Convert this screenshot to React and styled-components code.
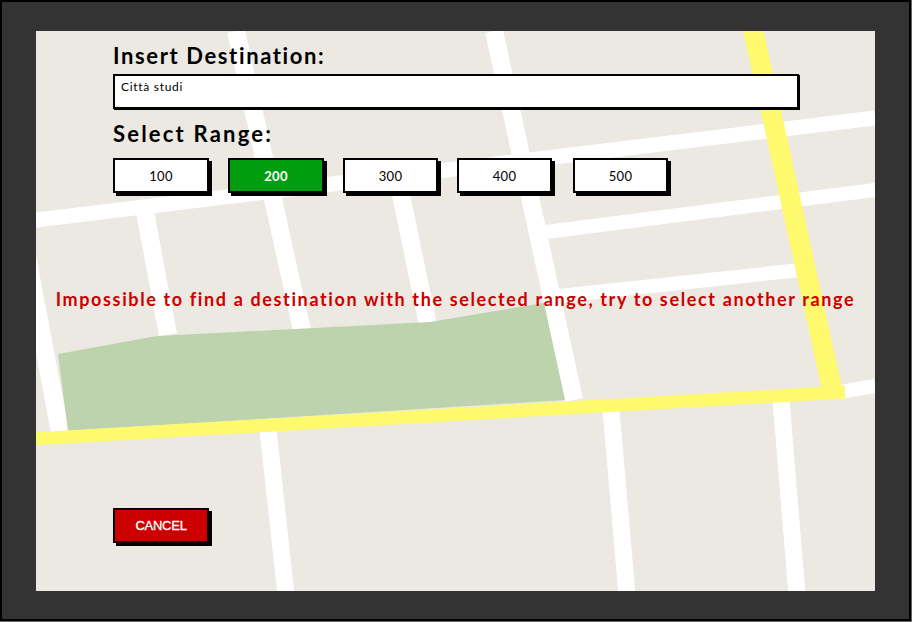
import React from 'react'
import styled, { createGlobalStyle } from 'styled-components'

const GlobalStyle = createGlobalStyle`
    html, body {
        margin: 0;
        padding: 0;
        background: #666;
    }
`

const Frame = styled.div`
    box-sizing: border-box;
    width: 911px;
    height: 621px;
    padding: 29px 34px 28px 34px;
    background: #333;
    border: 2px solid #000;
`

const Screen = styled.main`
    position: relative;
    box-sizing: border-box;
    width: 839px;
    height: 560px;
    padding: 11px 76px 0 77px;
    display: flex;
    flex-direction: column;
    background: #ebe9e1;
    overflow: hidden;
    font-family: "Lato", "Liberation Sans", sans-serif;
    color: #000;
`

const MapDrawing = styled.svg`
    position: absolute;
    top: 0;
    left: 0;
    width: 839px;
    height: 560px;
    filter: blur(0.4px);
`

const Content = styled.div`
    position: relative;
    display: flex;
    flex-direction: column;
    flex: 1;
`

const Label = styled.label`
    display: block;
    height: 28px;
    line-height: 28px;
    font-size: 22px;
    font-weight: 700;
    letter-spacing: ${props => props.$spacing}px;
    white-space: nowrap;
`

const DestinationBox = styled.div`
    box-sizing: border-box;
    width: 686px;
    height: 35px;
    margin: 4px 0 11px;
    padding: 3px 6px;
    background: #fff;
    border: 2px solid #000;
    box-shadow: 1px 1px 0 #000;
    font-size: 12px;
    line-height: 15px;
    letter-spacing: 0.7px;
`

const RangeRow = styled.div`
    display: flex;
    gap: 19px;
    margin-top: 10px;

    button:last-child {
        margin-left: 2px;
    }
`

const SketchButton = styled.button`
    box-sizing: border-box;
    width: ${props => props.$wide ? 96 : 95}px;
    height: 35px;
    padding: 0;
    border: 2px solid #000;
    border-radius: 0;
    box-shadow: 3px 3px 0 #000;
    background: ${props => props.$bg || '#fff'};
    color: ${props => props.$bg ? '#fff' : '#000'};
    font-family: "Lato", "Liberation Sans", sans-serif;
    font-size: 13px;
    font-weight: ${props => props.$bg ? 700 : 400};
    letter-spacing: 0.3px;
`

const ErrorMessage = styled.p`
    margin: 94px 0 0 -77px;
    width: 839px;
    text-align: center;
    color: #c00;
    font-size: 18px;
    line-height: 24px;
    font-weight: 700;
    letter-spacing: 1.63px;
    white-space: nowrap;
`

const CancelButton = styled(SketchButton)`
    margin-top: 197px;
    font-family: "Liberation Sans", Arial, sans-serif;
    font-size: 13px;
    font-weight: 400;
    letter-spacing: -0.25px;
    -webkit-text-stroke: 0.3px #fff;
`

const ROADS = [
    [236, 31, 303, 335, 18],
    [494, 31, 574, 400, 18],
    [145, 212, 168, 335, 18],
    [24, 240, 60, 432, 18],
    [400, 190, 428, 325, 18],
    [36, 220, 875, 118, 15],
    [546, 232, 875, 190, 14],
    [550, 297, 800, 270, 14],
    [840, 392, 875, 386, 14],
    [268, 430, 286, 595, 17],
    [611, 410, 627, 595, 17],
    [781, 400, 797, 595, 17]
]

const HIGHWAYS = [
    [30, 439, 845, 392, 13],
    [752, 25, 834, 398, 20]
]

const RANGES = [100, 200, 300, 400, 500]

export default function App() {
    return (
        <Frame>
            <GlobalStyle />
            <Screen>
                <MapDrawing viewBox="36 31 839 560">
                    {ROADS.map(([x1, y1, x2, y2, w], i) => (
                        <line key={i} x1={x1} y1={y1} x2={x2} y2={y2} stroke="#fff" strokeWidth={w} />
                    ))}
                    <polygon points="58,354 157,336 430,322 544,303 565,400 68,431" fill="#bcd3ad" />
                    {HIGHWAYS.map(([x1, y1, x2, y2, w], i) => (
                        <line key={i} x1={x1} y1={y1} x2={x2} y2={y2} stroke="#fff96e" strokeWidth={w} />
                    ))}
                </MapDrawing>
                <Content>
                    <Label $spacing={1.62}>Insert Destination:</Label>
                    <DestinationBox>Città studi</DestinationBox>
                    <Label $spacing={2.2}>Select Range:</Label>
                    <RangeRow>
                        {RANGES.map(range => (
                            <SketchButton key={range} $wide={range < 300} $bg={range === 200 ? '#009e0f' : null}>
                                {range}
                            </SketchButton>
                        ))}
                    </RangeRow>
                    <ErrorMessage>Impossible to find a destination with the selected range, try to select another range</ErrorMessage>
                    <CancelButton $wide $bg="#cc0000">CANCEL</CancelButton>
                </Content>
            </Screen>
        </Frame>
    )
}
